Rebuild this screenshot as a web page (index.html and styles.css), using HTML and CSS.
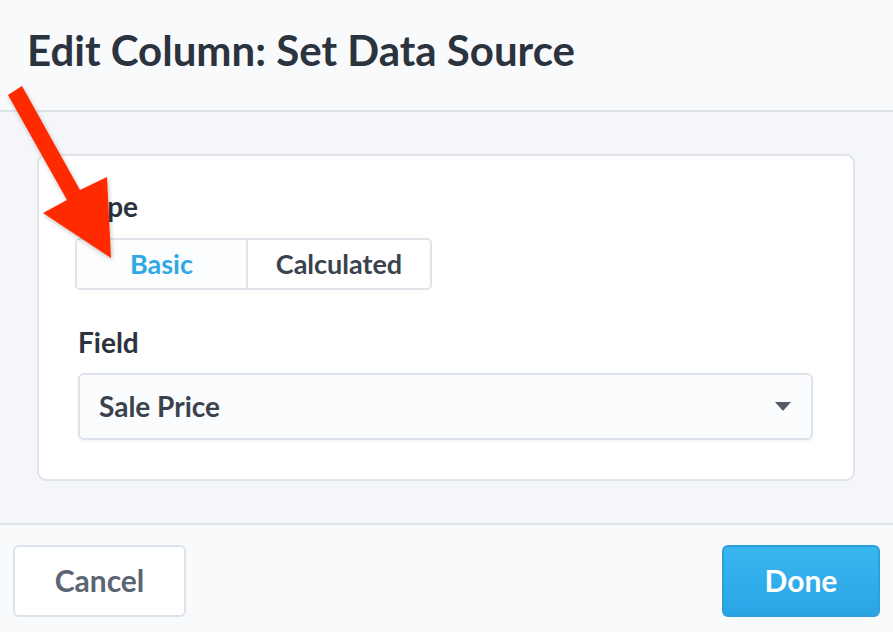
FILE: index.html
```html
<!DOCTYPE html>
<html lang="en">
<head>
<meta charset="utf-8">
<title>Edit Column: Set Data Source</title>
<link rel="stylesheet" href="styles.css">
</head>
<body>
<div class="dialog">
  <header class="dialog-header">
    <h1 class="dialog-title">Edit Column: Set Data Source</h1>
  </header>
  <main class="dialog-body">
    <section class="card">
      <div class="field-label">Type</div>
      <div class="segmented">
        <button class="seg seg-active">Basic</button>
        <button class="seg">Calculated</button>
      </div>
      <div class="field-label field-label-second">Field</div>
      <div class="select">
        <span class="select-value">Sale Price</span>
        <svg class="caret" width="16" height="9" viewBox="0 0 16 9"><polygon points="0,0 16,0 8,9" fill="#555b66"/></svg>
      </div>
    </section>
  </main>
  <footer class="dialog-footer">
    <button class="btn btn-cancel">Cancel</button>
    <button class="btn btn-done">Done</button>
  </footer>
</div>
<svg class="arrow" width="893" height="632" viewBox="0 0 893 632">
  <defs>
    <filter id="sh" x="-20%" y="-20%" width="140%" height="140%">
      <feDropShadow dx="1" dy="2" stdDeviation="2" flood-color="#000" flood-opacity="0.25"/>
    </filter>
  </defs>
  <polygon points="8,95 22,86 80,190 107,177 111,258 43,213 67,200" fill="#ff2a00" filter="url(#sh)"/>
</svg>
</body>
</html>
```
FILE: styles.css
```css
* { box-sizing: border-box; }
html, body { margin: 0; padding: 0; }
body {
  width: 893px;
  height: 632px;
  overflow: hidden;
  font-family: Lato, "Open Sans", sans-serif;
  font-weight: 700;
  background: #f9fafc;
  position: relative;
}
.dialog {
  display: flex;
  flex-direction: column;
  height: 632px;
}
.dialog-header {
  height: 112px;
  padding: 25px 0 0 27px;
  background: #f9fafc;
  border-bottom: 2px solid #dde2e9;
}
.dialog-title {
  margin: 0;
  font-size: 42px;
  line-height: 50px;
  font-weight: 700;
  color: #2b333e;
}
.dialog-body {
  height: 413px;
  padding: 42px 38px 0 37px;
  background: #f5f6f9;
  border-bottom: 2px solid #dde2e9;
}
.card {
  height: 327px;
  background: #fff;
  border: 2px solid #dfe4eb;
  border-radius: 9px;
  padding: 33px 40px 0 39px;
  display: flex;
  flex-direction: column;
  align-items: flex-start;
}
.field-label {
  font-size: 28px;
  line-height: 34px;
  color: #2b333e;
  margin-bottom: 15px;
}
.field-label-second {
  margin-top: 35px;
  margin-bottom: 14px;
}
.segmented {
  display: flex;
  height: 52px;
  margin-left: -3px;
  border: 2px solid #dfe4eb;
  border-radius: 5px;
  overflow: hidden;
}
.seg {
  font-family: inherit;
  font-weight: 700;
  font-size: 27px;
  line-height: 44px;
  border: 0;
  margin: 0;
  padding: 0;
  background: #fff;
  color: #3a424d;
  height: 48px;
}
.seg-active {
  width: 171px;
  color: #2fa8e6;
  background: #fcfdfe;
  border-right: 2px solid #dfe4eb;
}
.seg + .seg { width: 182px; }
.select {
  align-self: stretch;
  height: 67px;
  border: 2px solid #dde3ea;
  border-radius: 6px;
  background: #fbfcfd;
  box-shadow: 0 2px 3px rgba(0,0,0,0.04);
  display: flex;
  align-items: center;
  justify-content: space-between;
  padding: 0 20px 2px 19px;
}
.select-value {
  font-size: 28px;
  color: #3a424d;
}
.caret { display: block; margin-top: 2px; }
.dialog-footer {
  flex: 1;
  background: #f9fafc;
  display: flex;
  justify-content: space-between;
  align-items: flex-start;
  padding: 20px 13px 0 13px;
}
.btn {
  font-family: inherit;
  font-weight: 700;
  font-size: 30px;
  line-height: 64px;
  height: 72px;
  border-radius: 6px;
  margin: 0;
  padding: 0 0 2px;
}
.btn-cancel {
  width: 173px;
  background: #fff;
  border: 2px solid #dde3ea;
  color: #5b6571;
}
.btn-done {
  width: 158px;
  background: linear-gradient(#3ab6ef, #29a5e6);
  border: 2px solid #2c9fdc;
  color: #fff;
}
.arrow {
  position: absolute;
  left: 0;
  top: 0;
  pointer-events: none;
}
```
